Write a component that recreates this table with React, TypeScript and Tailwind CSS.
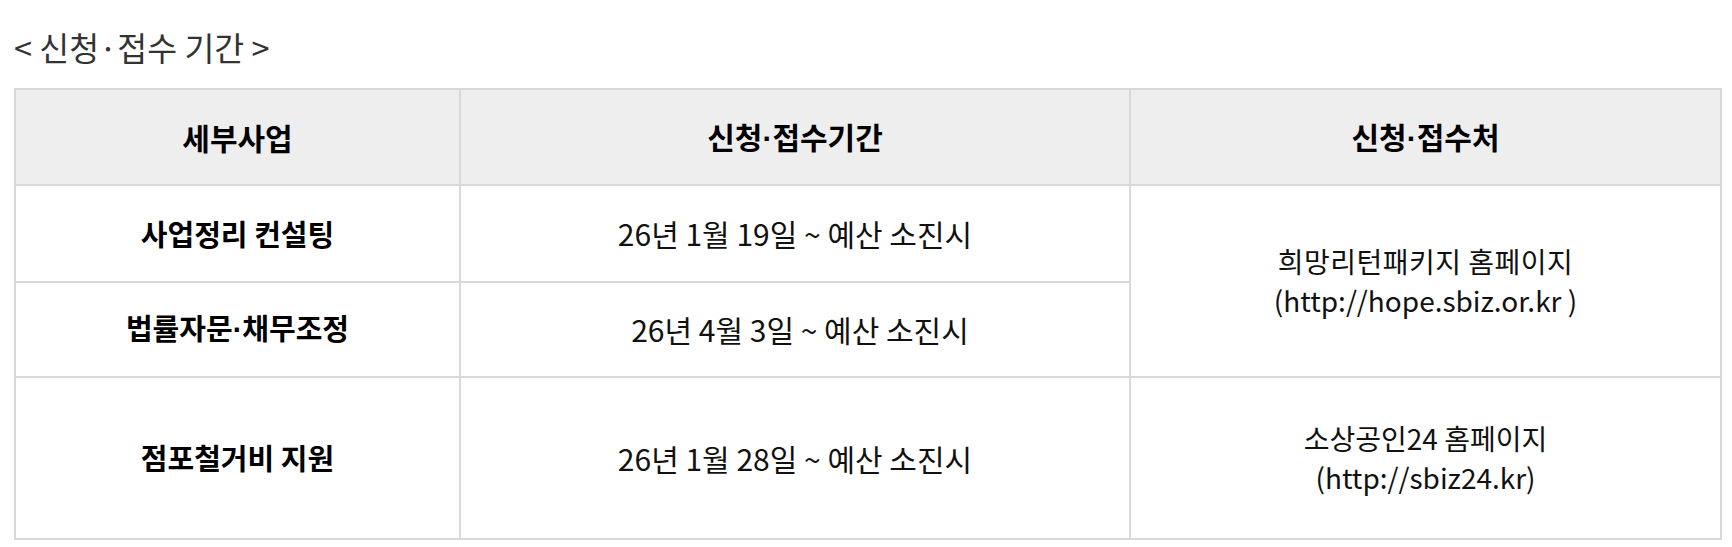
export default function App() {
  const cell = "flex flex-col items-center justify-center border-r-2 border-b-2 border-[#d9d9d9] text-center";
  const head = `${cell} bg-[#eeeeee] text-[30px] font-bold text-black`;
  const bold = `${cell} text-[29px] font-bold text-black`;
  const body = `${cell} text-[30px] text-[#111111]`;
  const site = `${cell} text-[28px] leading-[39px] text-[#111111]`;
  const dot = <span style={{ fontFamily: '"Liberation Sans", sans-serif' }}>·</span>;
  return (
    <div
      className="w-[1732px] h-[547px] bg-white pl-[14px] pt-[24px]"
      style={{ fontFamily: '"Noto Sans CJK KR", "Noto Sans", sans-serif' }}
    >
      <div className="h-[46px] text-[32.5px] leading-[46px] text-[#333333]">&lt; 신청·접수 기간 &gt;</div>
      <div className="mt-[18px] grid w-[1708px] grid-cols-[445px_670px_591px] grid-rows-[96px_97px_95px_162px] border-l-2 border-t-2 border-[#d9d9d9]">
        <div className={head}><div>세부사업</div></div>
        <div className={head}><div>신청{dot}접수기간</div></div>
        <div className={head}><div>신청{dot}접수처</div></div>

        <div className={bold}><div>사업정리 컨설팅</div></div>
        <div className={body}><div>26년 1월 19일 ~ 예산 소진시</div></div>
        <div className={`${site} row-span-2`}>
          <div className="tracking-[0.5px]">희망리턴패키지 홈페이지</div>
          <div>(http://hope.sbiz.or.kr )</div>
        </div>

        <div className={bold}><div>법률자문{dot}채무조정</div></div>
        <div className={`${body} pl-[10px]`}><div>26년 4월 3일 ~ 예산 소진시</div></div>

        <div className={bold}><div>점포철거비 지원</div></div>
        <div className={body}><div>26년 1월 28일 ~ 예산 소진시</div></div>
        <div className={site}>
          <div>소상공인24 홈페이지</div>
          <div>(http://sbiz24.kr)</div>
        </div>
      </div>
    </div>
  );
}
